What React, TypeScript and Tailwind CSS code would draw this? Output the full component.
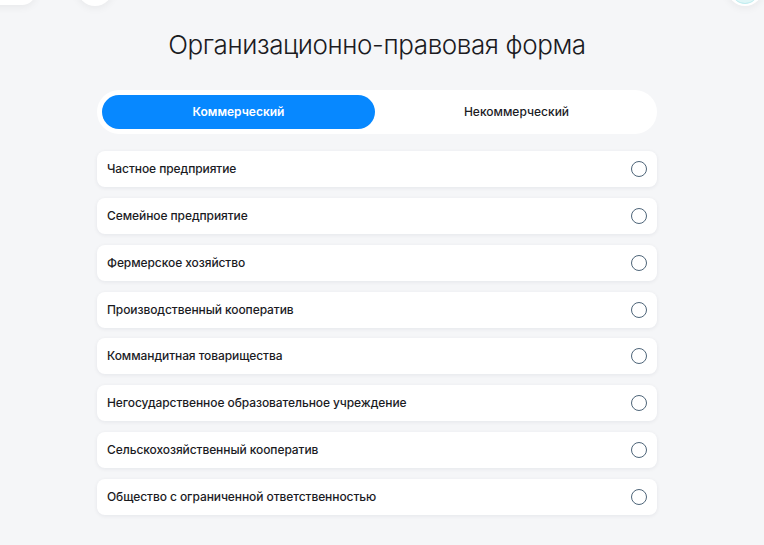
import React from "react";

const items = [
  "Частное предприятие",
  "Семейное предприятие",
  "Фермерское хозяйство",
  "Производственный кооператив",
  "Коммандитная товарищества",
  "Негосударственное образовательное учреждение",
  "Сельскохозяйственный кооператив",
  "Общество с ограниченной ответственностью",
];

export default function App() {
  return (
    <div
      className="relative w-[764px] h-[545px] overflow-hidden bg-[#f5f6f8] text-[#1b1b1f]"
      style={{ fontFamily: "Inter, 'Noto Sans', sans-serif" }}
    >
      {/* partial top elements */}
      <div className="absolute left-[-20px] top-[-40px] w-[56px] h-[45px] rounded-[14px] bg-white shadow-[0_2px_8px_rgba(0,0,0,0.06)]" />
      <div className="absolute left-[77px] top-[-30px] w-[36px] h-[36px] rounded-full bg-white shadow-[0_2px_8px_rgba(0,0,0,0.06)]" />
      <div className="absolute left-[727px] top-[-30px] w-[36px] h-[36px] rounded-full bg-white shadow-[0_2px_8px_rgba(0,0,0,0.06)] flex items-end justify-center pb-[2px]">
        <div className="w-[26px] h-[14px] rounded-b-full bg-[#dff6f7] border-b border-[#bfecef]" />
      </div>

      <div className="w-[754px] flex flex-col items-center">
        <h1 className="mt-[28px] text-[26px] font-light leading-[33px] tracking-[-0.4px] text-[#1b1b1f]">
          Организационно-правовая форма
        </h1>

        <div className="mt-[29px] w-[560px] h-[44px] rounded-full bg-white p-[5px] flex">
          <button className="w-[273px] h-[34px] rounded-full bg-[#0788ff] text-white text-[12px] font-semibold">
            Коммерческий
          </button>
          <button className="flex-1 h-[34px] rounded-full text-[12px] font-medium text-[#1b1b1f] pl-[6px]">
            Некоммерческий
          </button>
        </div>

        <div className="mt-[17px] w-[560px] flex flex-col gap-[10.85px]">
          {items.map((t) => (
            <div
              key={t}
              className="h-[36px] rounded-[8px] bg-white shadow-[0_1px_4px_rgba(20,30,50,0.07)] flex items-center justify-between pl-[10px] pr-[10px]"
            >
              <span className="text-[12px] font-medium tracking-[-0.08px] text-[#1b1b1f]">{t}</span>
              <span className="w-[16px] h-[16px] rounded-full border border-[#4e6579]" />
            </div>
          ))}
        </div>
      </div>
    </div>
  );
}
